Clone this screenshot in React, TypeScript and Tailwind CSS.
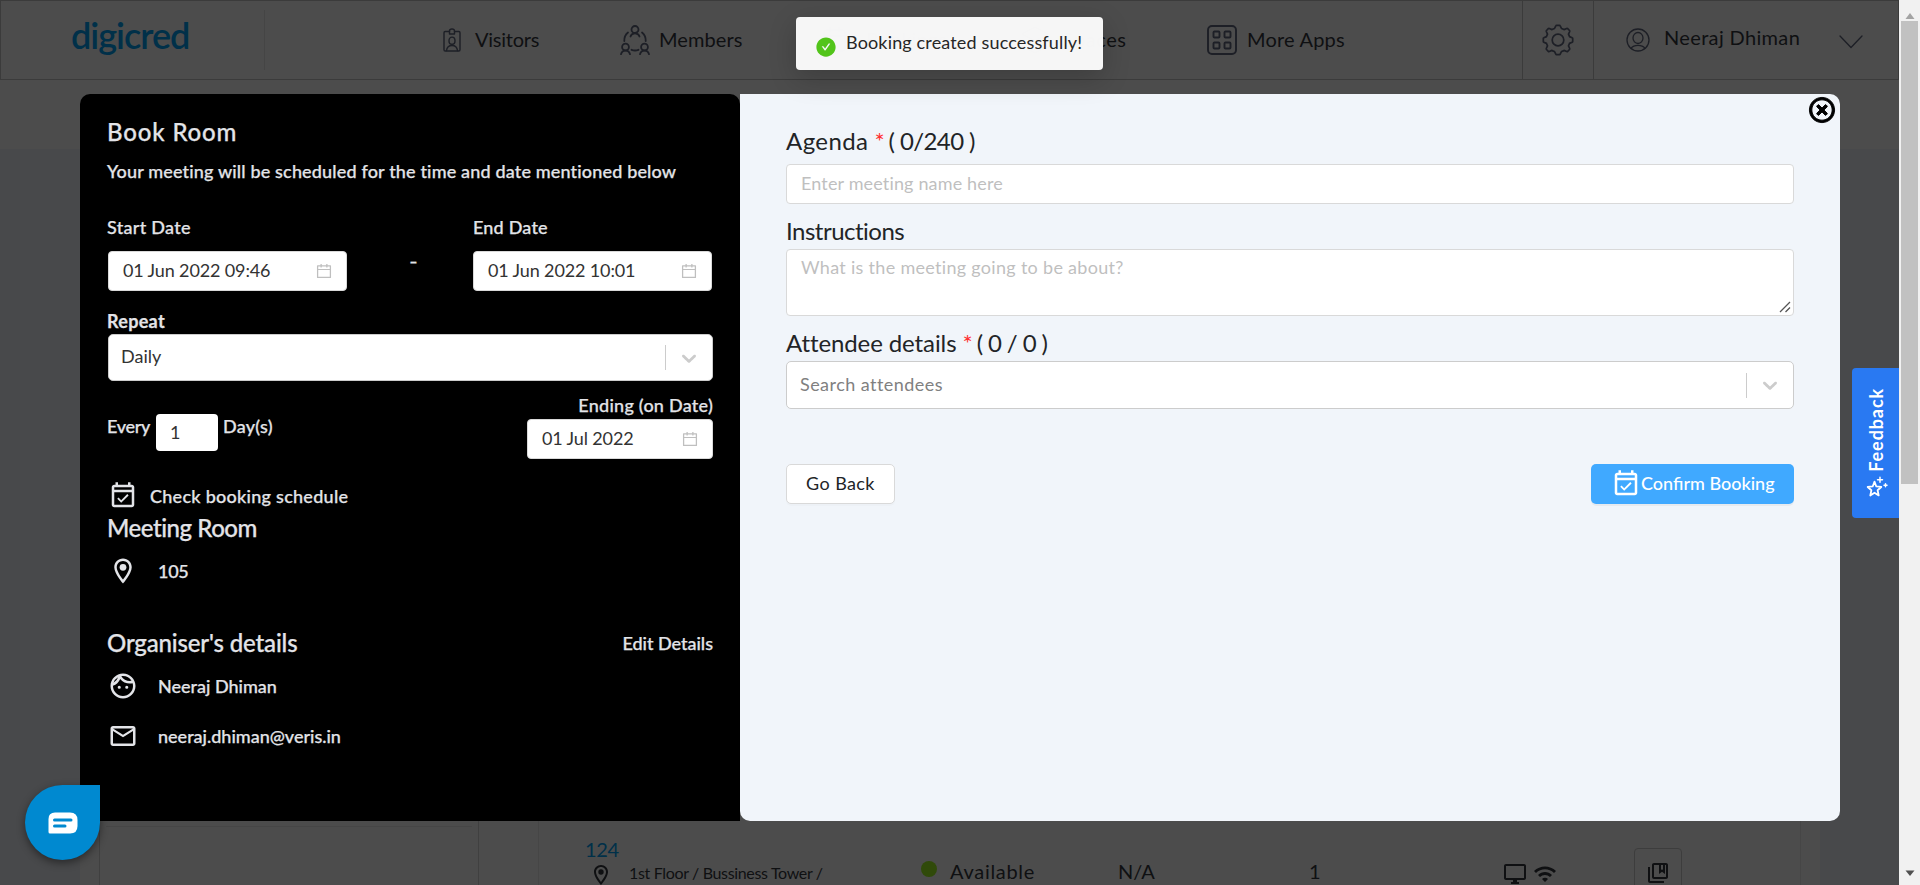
import type { ReactNode } from "react";
import { AiFillCheckCircle, AiOutlineCalendar } from "react-icons/ai";
import { FaRegTimesCircle } from "react-icons/fa";
import {
  MdMailOutline,
  MdOutlineCollectionsBookmark,
  MdOutlineDesktopWindows,
  MdOutlineEventAvailable,
  MdOutlineFace,
  MdWifi,
} from "react-icons/md";

const stroke = { fill: "none", stroke: "currentColor", strokeLinecap: "round", strokeLinejoin: "round" } as const;

function BadgeIcon() {
  return (
    <svg width="18" height="24" viewBox="0 0 18 24" {...stroke} strokeWidth="1.4">
      <path d="M6.5 3.5H2.2A1.2 1.2 0 0 0 1 4.700V21.800A1.200 1.200 0 0 0 2.200 23H15.800A1.200 1.200 0 0 0 17 21.800V4.700A1.200 1.200 0 0 0 15.800 3.500H11.500" />
      <path d="M6.500 6V3A2.500 2 0 0 1 11.500 3V6Z" />
      <ellipse cx="9" cy="12.700" rx="3" ry="3.600" />
      <path d="M3.500 22.500C4 18.500 6.500 17.500 9 17.500S14 18.500 14.500 22.500" />
    </svg>
  );
}

function MembersIcon() {
  return (
    <svg width="30" height="30" viewBox="0 0 30 30" {...stroke} strokeWidth="1.8">
      <circle cx="15" cy="4.500" r="3.500" />
      <path d="M10.500 11.500C11 9.500 13 8.300 15 8.300S19 9.500 19.500 11.500" />
      <circle cx="5.500" cy="22" r="3.400" />
      <path d="M1 29.200C1.500 27 3.500 25.600 5.500 25.600S9.500 27 10 29.200" />
      <circle cx="24.500" cy="22" r="3.400" />
      <path d="M20 29.200C20.500 27 22.500 25.600 24.500 25.600S28.500 27 29 29.200" />
      <path d="M8 7.500C5.500 9.500 4.200 12.500 4.300 16M22 7.500C24.500 9.500 25.800 12.500 25.700 16M11.500 24.800C13.500 25.600 16.500 25.600 18.500 24.800" />
    </svg>
  );
}

function BookingsIcon() {
  return (
    <svg width="26" height="28" viewBox="0 0 26 28" {...stroke} strokeWidth="1.5">
      <rect x="2" y="4" width="21" height="21" rx="2" />
      <path d="M2 10H23M8 1V6M17 1V6" />
    </svg>
  );
}

function SpacesIcon() {
  return (
    <svg width="30" height="30" viewBox="0 0 30 30" {...stroke} strokeWidth="1.5">
      <path d="M15 2L28 9L15 16L2 9ZM2 15L15 22L28 15M2 21L15 28L28 21" />
    </svg>
  );
}

function AppsIcon() {
  return (
    <svg width="30" height="30" viewBox="0 0 30 30" {...stroke} strokeWidth="1.9">
      <rect x="1" y="1" width="28" height="28" rx="4" />
      <rect x="6.500" y="6.500" width="6" height="6" rx="1" />
      <rect x="17.500" y="6.500" width="6" height="6" rx="1" />
      <rect x="6.500" y="17.500" width="6" height="6" rx="1" />
      <rect x="17.500" y="17.500" width="6" height="6" rx="1" />
    </svg>
  );
}

function GearIcon() {
  return (
    <svg width="32" height="32" viewBox="0 0 32 32" {...stroke} strokeWidth="1.700">
      <circle cx="16" cy="16" r="5.800" />
      <path d="M12.500 4.500L13.800 1.800Q14 1.300 14.600 1.300H17.400Q18 1.300 18.200 1.800L19.500 4.500Q20.800 4.900 22 5.600L24.700 4.500Q25.300 4.300 25.700 4.700L27.500 6.500Q27.900 6.900 27.700 7.500L26.500 10.200Q27.200 11.400 27.500 12.600L30.200 13.800Q30.700 14 30.700 14.600V17.400Q30.700 18 30.200 18.200L27.500 19.400Q27.200 20.600 26.500 21.800L27.700 24.500Q27.900 25.100 27.500 25.500L25.700 27.300Q25.300 27.700 24.700 27.500L22 26.400Q20.800 27.100 19.500 27.500L18.200 30.200Q18 30.700 17.400 30.700H14.600Q14 30.700 13.800 30.200L12.500 27.500Q11.200 27.100 10 26.400L7.300 27.500Q6.700 27.700 6.300 27.300L4.500 25.500Q4.100 25.100 4.300 24.500L5.500 21.800Q4.800 20.600 4.500 19.400L1.800 18.200Q1.300 18 1.300 17.400V14.600Q1.300 14 1.800 13.800L4.500 12.600Q4.800 11.400 5.500 10.200L4.300 7.500Q4.100 6.900 4.500 6.500L6.300 4.700Q6.700 4.300 7.300 4.500L10 5.600Q11.200 4.900 12.500 4.500Z" />
    </svg>
  );
}

function UserIcon() {
  return (
    <svg width="24" height="24" viewBox="0 0 24 24" {...stroke} strokeWidth="1.300">
      <circle cx="12" cy="12" r="11" />
      <ellipse cx="12" cy="10" rx="5" ry="5.500" />
      <path d="M5 20.300C6.500 18.300 9 17.300 12 17.300S17.500 18.300 19 20.300" />
    </svg>
  );
}

function PinIcon({ className }: { className: string }) {
  return (
    <svg className={className} viewBox="0 0 24 24" fill="currentColor">
      <path d="M12 2C8.130 2 5 5.130 5 9c0 5.250 7 13 7 13s7-7.750 7-13c0-3.870-3.130-7-7-7zM7 9c0-2.760 2.240-5 5-5s5 2.240 5 5c0 2.880-2.880 7.190-5 9.880C9.920 16.210 7 11.850 7 9z" />
      <circle cx="12" cy="9" r="2.700" />
    </svg>
  );
}

function SelectArrow() {
  return (
    <div className="flex h-[25px] w-[47px] items-center justify-center border-l border-[#ccc] text-[#ccc]">
      <svg width="24" height="24" viewBox="0 0 20 20" fill="currentColor">
        <path d="M4.516 7.548c0.436-0.446 1.043-0.481 1.576 0l3.908 3.747 3.908-3.747c0.533-0.481 1.141-0.446 1.574 0 0.436 0.445 0.408 1.197 0 1.615-0.406 0.418-4.695 4.502-4.695 4.502-0.217 0.223-0.502 0.335-0.787 0.335s-0.570-0.112-0.789-0.335c0 0-4.287-4.084-4.695-4.502s-0.436-1.170 0-1.615z" />
      </svg>
    </div>
  );
}

function DateField({ value, className }: { value: string; className: string }) {
  return (
    <div className={`flex h-10 items-center justify-between rounded-sm border border-[#d9d9d9] bg-white pr-[13px] pl-[14px] text-[#333] [-webkit-text-stroke:0] ${className}`}>
      <span className="-mt-[3px] font-normal tracking-[-0.13px]">{value}</span>
      <AiOutlineCalendar className="size-[18px] text-[#bfbfbf]" />
    </div>
  );
}

function NavItem({ icon, label, className }: { icon: ReactNode; label: ReactNode; className: string }) {
  return (
    <div className={`flex shrink-0 items-center ${className}`}>
      <span className="text-[#1d1f26]">{icon}</span>
      {label}
    </div>
  );
}

function Header() {
  return (
    <header className="flex h-20 shrink-0 border border-[#3b3b3b] text-[20px] leading-6">
      <div className="flex w-[263px] shrink-0 items-center">
        <span className="-mt-[11px] ml-[70px] text-[36px] leading-[44px] font-semibold tracking-[-1px] text-[#003049]">digicred</span>
      </div>
      <div className="my-[9px] w-px shrink-0 bg-[#454545]" />
      <nav className="flex flex-1 items-center pl-[178px]">
        <NavItem className="w-[177px]" icon={<BadgeIcon />} label={<span className="-mt-0.5 ml-[14px] tracking-[-0.25px]">Visitors</span>} />
        <NavItem className="w-[202px]" icon={<MembersIcon />} label={<span className="-mt-0.5 ml-[9px] tracking-[0.1px]">Members</span>} />
        <NavItem className="w-[198px]" icon={<BookingsIcon />} label={<span className="-mt-0.5 ml-[18px]">Bookings</span>} />
        <NavItem className="w-[187px]" icon={<SpacesIcon />} label={<span className="-mt-0.5 ml-[13px] tracking-[0.5px]">Spaces</span>} />
        <NavItem className="w-[200px]" icon={<AppsIcon />} label={<span className="-mt-0.5 ml-[10px] tracking-[0.2px]">More Apps</span>} />
      </nav>
      <div className="flex w-[71px] shrink-0 items-center justify-center border-l border-[#3b3b3b] text-[#1d1f26]">
        <GearIcon />
      </div>
      <div className="flex w-[305px] shrink-0 items-center border-l border-[#3b3b3b] pl-8">
        <span className="text-[#1d1f26]">
          <UserIcon />
        </span>
        <span className="-mt-[6px] ml-[14px] tracking-[0.35px]">Neeraj Dhiman</span>
        <svg className="mt-1 ml-[39px] text-[#1d1f26]" width="24" height="14" viewBox="0 0 24 14" {...stroke} strokeWidth="1.300">
          <path d="M1 1L12 12.500L23 1" />
        </svg>
      </div>
    </header>
  );
}

function RoomList() {
  return (
    <div className="flex flex-1 bg-[#48494b] pl-20">
      <div className="flex w-[1740px] bg-[#4c4c4c] pl-[19px]">
        <div className="w-[380px] border-x border-[#404040] px-[6px] pt-[677px]">
          <div className="h-px bg-[#464646]" />
        </div>
        <div className="ml-[59px] flex w-[1263px] border-x border-[#464646] pt-[688px] text-[20px] leading-6">
          <div className="w-[382px] pl-[46px]">
            <div className="tracking-[-0.3px] text-[#003049]">124</div>
            <div className="flex items-center pl-1">
              <PinIcon className="mt-0.5 size-6" />
              <span className="-mt-0.5 ml-[16px] text-[16px] whitespace-nowrap tracking-[-0.34px]">1st Floor / Bussiness Tower /</span>
            </div>
          </div>
          <div className="flex w-[197px] pt-[22px]">
            <span className="mt-[2px] size-4 rounded-full bg-[#304a0a]" />
            <span className="ml-[13px] tracking-[0.7px]">Available</span>
          </div>
          <div className="w-[191px] pt-[22px]">N/A</div>
          <div className="w-[194px] pt-[22px]">1</div>
          <div className="flex w-[131px] gap-[6px] pt-[25px]">
            <MdOutlineDesktopWindows className="size-6" />
            <MdWifi className="size-6" />
          </div>
          <div className="mt-[11px] h-12 w-12 rounded-sm border border-[#3d3d3d] pt-3 pl-[11px]">
            <MdOutlineCollectionsBookmark className="size-6" />
          </div>
        </div>
      </div>
    </div>
  );
}

function BookingSummary() {
  return (
    <section className="w-[660px] rounded-t-[10px] bg-black pt-[22px] pr-[27px] pl-[27px] text-[18px] leading-6 font-medium text-[#e3e4e8] [-webkit-text-stroke:0.25px]">
      <h2 className="text-[24px] leading-8 tracking-[0.85px]">Book Room</h2>
      <p className="mt-[11px] whitespace-nowrap tracking-[0.16px]">Your meeting will be scheduled for the time and date mentioned below</p>
      <div className="mt-8 flex pl-px">
        <div className="w-[239px]">
          <div className="-ml-px tracking-[0.3px]">Start Date</div>
          <DateField value="01 Jun 2022 09:46" className="mt-3" />
        </div>
        <div className="flex-1 pt-[34px] pl-[63px]">
          <span className="inline-block scale-x-125">-</span>
        </div>
        <div className="mr-px w-[239px]">
          <div className="tracking-[0.2px]">End Date</div>
          <DateField value="01 Jun 2022 10:01" className="mt-3" />
        </div>
      </div>
      <div className="mt-[18px] font-bold tracking-[0.3px]">Repeat</div>
      <div className="mt-px ml-px flex h-[47px] items-center justify-between rounded-[5px] border border-[#ccc] bg-white pl-3 font-normal text-[#333] [-webkit-text-stroke:0]">
        <span className="-mt-[3px]">Daily</span>
        <SelectArrow />
      </div>
      <div className="mt-3 flex justify-between">
        <div className="flex">
          <span className="mt-[21px] w-[49px] tracking-[-0.3px]">Every</span>
          <span className="mt-[21px] h-[37px] w-[62px] rounded-sm bg-white pt-[6px] pl-[14px] font-normal text-[#333] [-webkit-text-stroke:0]">1</span>
          <span className="mt-[21px] ml-[5px] tracking-[0.25px]">Day(s)</span>
        </div>
        <div className="w-[186px]">
          <div className="text-right tracking-[0.25px]">Ending (on Date)</div>
          <DateField value="01 Jul 2022" className="mt-0.5" />
        </div>
      </div>
      <div className="mt-[22px] flex items-center gap-3 pl-px">
        <MdOutlineEventAvailable className="size-[30px]" />
        <span className="-mt-px tracking-[0.27px]">Check booking schedule</span>
      </div>
      <h3 className="mt-px text-[24px] leading-8 tracking-[-0.45px]">Meeting Room</h3>
      <div className="mt-3 flex items-center gap-5 pl-px">
        <PinIcon className="size-[30px]" />
        <span className="tracking-[-0.3px]">105</span>
      </div>
      <div className="mt-[41px] flex items-center justify-between">
        <h3 className="text-[24px] leading-8 tracking-[-0.15px]">Organiser's details</h3>
        <span className="-mt-px">Edit Details</span>
      </div>
      <div className="mt-3 flex items-center gap-5 pl-px">
        <MdOutlineFace className="size-[30px]" />
        <span className="-mt-px">Neeraj Dhiman</span>
      </div>
      <div className="mt-5 flex items-center gap-5 pl-px">
        <MdMailOutline className="size-[30px]" />
        <span className="-mt-px">neeraj.dhiman@veris.in</span>
      </div>
    </section>
  );
}

function BookingForm() {
  return (
    <section className="w-[1100px] rounded-r-[10px] rounded-bl-[10px] bg-[#f1f5fa] px-[46px] pt-[31px] text-[18px] leading-6 text-[#222427]">
      <div className="flex text-[24px] leading-8">
        <span className="tracking-[0.4px]">Agenda</span>
        <span className="ml-[6px] text-[#ff3030]">*</span>
        <span className="ml-[4px] tracking-[-0.6px]">( 0/240 )</span>
      </div>
      <div className="mt-[7px] flex h-10 items-center rounded-sm border border-[#d9d9d9] bg-white px-[14px] tracking-[0.15px] text-[#bfbfbf]">
        <span className="-mt-[3px]">Enter meeting name here</span>
      </div>
      <div className="mt-[11px] text-[24px] leading-8 tracking-[-0.5px]">Instructions</div>
      <div className="mt-[2px] flex h-[67px] items-end justify-between rounded-sm border border-[#d9d9d9] bg-white pl-[14px] tracking-[0.3px] text-[#bfbfbf]">
        <span className="self-start pt-[5px]">What is the meeting going to be about?</span>
        <svg className="mr-0.5 mb-0.5" width="12" height="12" viewBox="0 0 12 12" stroke="#555" strokeWidth="1.300">
          <path d="M1 11L11 1M6.500 11L11 6.500" />
        </svg>
      </div>
      <div className="mt-[11px] flex text-[24px] leading-8">
        <span className="tracking-[-0.1px]">Attendee details</span>
        <span className="ml-[6px] text-[#ff3030]">*</span>
        <span className="ml-[4px] tracking-[-0.6px]">( 0 / 0 )</span>
      </div>
      <div className="mt-[2px] flex h-12 items-center justify-between rounded-[5px] border border-[#ccc] bg-white pl-[13px] text-[#808080]">
        <span className="-mt-0.5 tracking-[0.45px]">Search attendees</span>
        <SelectArrow />
      </div>
      <div className="mt-[55px] flex justify-between">
        <button className="flex h-10 w-[109px] items-center justify-center rounded-[5px] border border-[#d9d9d9] bg-white shadow-[0_2px_0_rgba(0,0,0,0.015)]">
          <span className="-mt-[3px] tracking-[0.4px]">Go Back</span>
        </button>
        <button className="flex h-10 w-[203px] items-center rounded-[5px] bg-[#40a9ff] pl-5 font-medium text-white shadow-[0_2px_0_rgba(0,0,0,0.045)]">
          <MdOutlineEventAvailable className="size-[30px]" />
          <span className="-mt-[3px]">Confirm Booking</span>
        </button>
      </div>
    </section>
  );
}

function Scrollbar() {
  return (
    <div className="flex w-[21px] shrink-0 flex-col items-center bg-[#f1f1f1]">
      <svg className="mt-[8px] shrink-0" width="10" height="12" viewBox="0 0 10 12" fill="#a3a3a3">
        <path d="M0.500 11L5 5L9.500 11Z" />
      </svg>
      <div className="mt-px -ml-px h-[463px] w-[17px] shrink-0 bg-[#c1c1c1]" />
      <svg className="mt-auto mb-[8px] shrink-0" width="10" height="7" viewBox="0 0 10 7" fill="#505050">
        <path d="M0.500 0.500L5 6L9.500 0.500Z" />
      </svg>
    </div>
  );
}

export default function App() {
  return (
    <div className="relative flex h-[885px] w-[1920px] overflow-hidden bg-[#4c4c4c] font-['Lato',sans-serif] text-[#0f1012]">
      <div className="flex w-[1899px] flex-col overflow-hidden">
        <Header />
        <div className="h-[69px] shrink-0" />
        <RoomList />
      </div>
      <Scrollbar />

      <div className="absolute top-[94px] left-20 flex h-[727px]">
        <BookingSummary />
        <BookingForm />
        <button className="absolute top-[3px] right-[5px] text-black">
          <FaRegTimesCircle className="size-[26px] overflow-visible" stroke="currentColor" strokeWidth="18" />
        </button>
      </div>

      <div className="absolute top-[17px] left-[796px] flex h-[53px] w-[307px] items-center rounded-sm bg-[#fafafa]/98 pl-5 text-[18px] leading-6 text-[#262626] shadow-[0_8px_28px_rgba(0,0,0,0.2)]">
        <AiFillCheckCircle className="mt-[6px] -ml-px size-[22px] text-[#52c41a]" />
        <span className="-mt-[3px] ml-[9px] tracking-[0.15px]">Booking created successfully!</span>
      </div>

      <div className="absolute top-[368px] left-[1852px] flex h-[150px] w-[47px] items-center justify-center rounded-l-[4px] bg-[#2979f2] text-white">
        <div className="flex rotate-180 items-center gap-[4px] [writing-mode:vertical-rl]">
          <svg className="mr-0.5 rotate-180" width="22" height="22" viewBox="0 0 22 22" {...stroke} strokeWidth="1.800">
            <path d="M8.500 6L10.300 10.800L15.300 11.300L11.600 14.600L12.700 19.800L8.500 17.100L4.300 19.800L5.400 14.600L1.700 11.300L6.700 10.800Z" />
            <path d="M14 1.500V6.500M11.500 4H16.500M19.500 8V11M18 9.500H21" strokeWidth="1.500" />
          </svg>
          <span className="text-[18px] leading-6 font-bold tracking-[0.9px]">Feedback</span>
        </div>
      </div>

      <div className="absolute top-[785px] left-[25px] flex size-[75px] items-center justify-center rounded-full rounded-tr-[8px] bg-[#0089d0] shadow-[0_3px_8px_rgba(0,0,0,0.45)]">
        <svg width="30" height="22" viewBox="0 0 30 22">
          <path d="M7 0.500H22Q29.500 0.500 29.500 8V14Q29.500 21.500 22 21.500H2Q0.500 21.500 0.500 20V7Q0.500 0.500 7 0.500Z" fill="#fff" />
          <path d="M6.500 8H23M6.500 14H17" stroke="#0089d0" strokeWidth="3" strokeLinecap="round" />
        </svg>
      </div>
    </div>
  );
}
